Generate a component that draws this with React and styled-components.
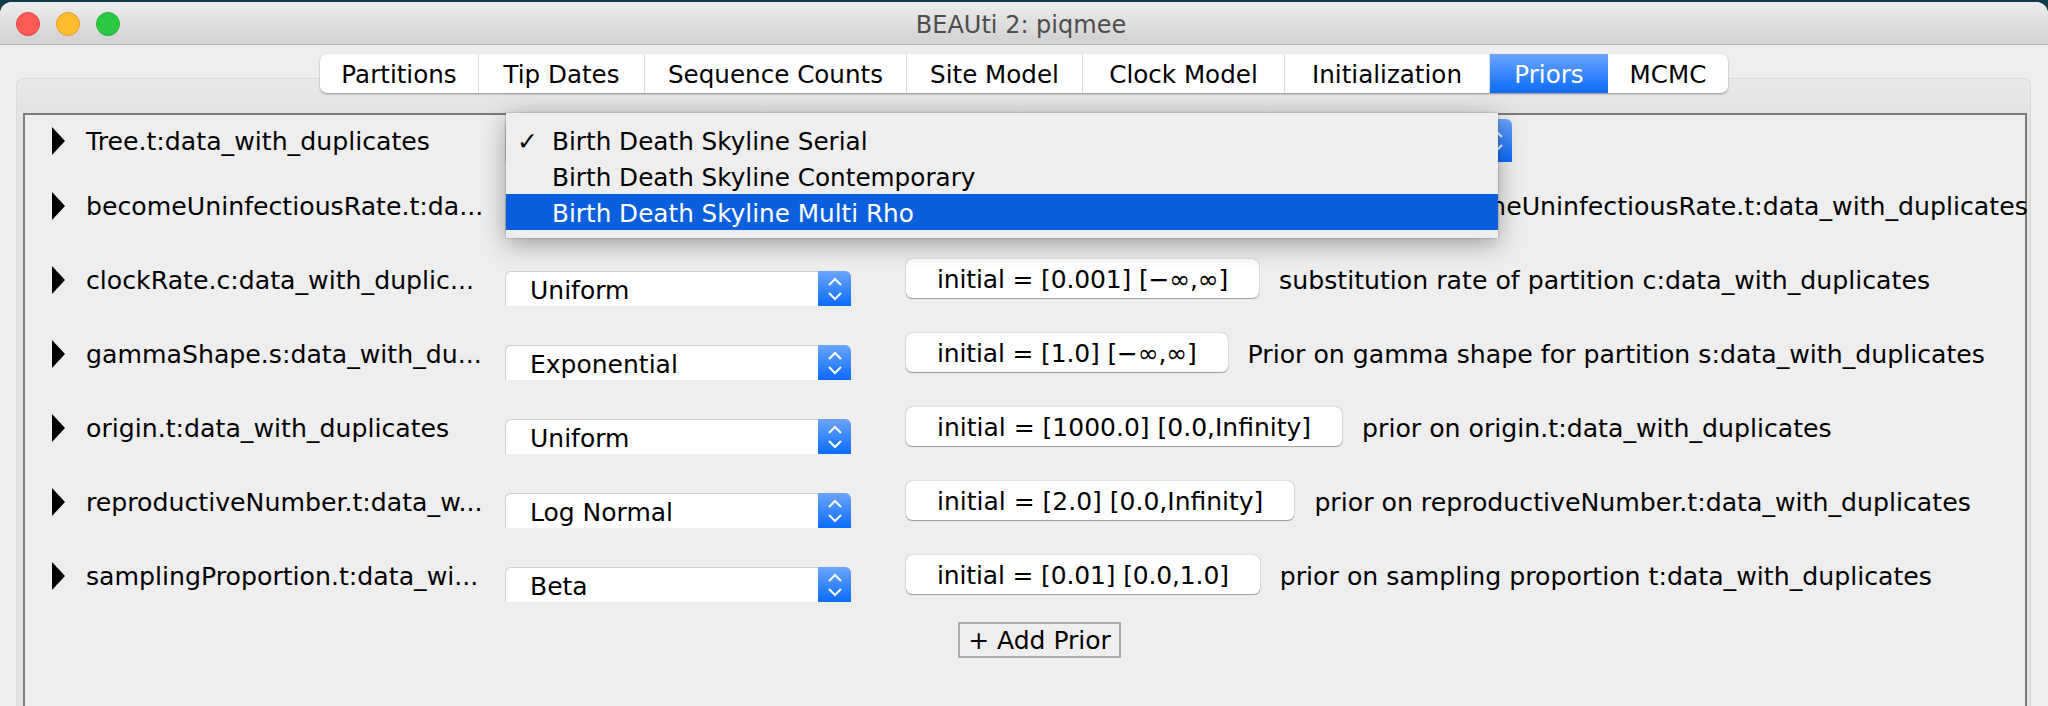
import React from 'react';
import styled, {createGlobalStyle} from 'styled-components';

const Global = createGlobalStyle`
  html, body {
    margin: 0;
    height: 100%;
    overflow: hidden;
    background: #0f3a4a;
    font-family: "DejaVu Sans", "Liberation Sans", sans-serif;
    color: #000;
  }
`;

const Desk = styled.div`
  height: 706px;
  padding-top: 2px;
  box-sizing: border-box;
`;

const Window = styled.div`
  position: relative;
  height: 704px;
  background: #eeeeee;
  border-radius: 12px 12px 0 0;
  overflow: hidden;
`;

const TitleBar = styled.div`
  position: relative;
  height: 43px;
  padding: 3px 6px 0 0;
  display: flex;
  align-items: center;
  justify-content: center;
  box-sizing: border-box;
  background: linear-gradient(#ececec, #d1d1d1);
  border-bottom: 1px solid #b4b4b4;
  color: #4d4d4d;
  font-size: 24px;
`;

const Lights = styled.div`
  position: absolute;
  left: 16px;
  top: 10px;
  display: flex;
  gap: 16px;
`;

const Light = styled.div`
  width: 24px;
  height: 24px;
  box-sizing: border-box;
  border-radius: 50%;
  background: ${p => p.$color};
  border: 1px solid ${p => p.$edge};
`;

const TabBar = styled.div`
  position: relative;
  z-index: 1;
  display: flex;
  width: 1408px;
  height: 39px;
  margin: 9px 0 0 320px;
  background: #fff;
  border-radius: 7px;
  box-shadow: 0 1px 2px rgba(0, 0, 0, 0.4);
  overflow: hidden;
`;

const Tab = styled.div`
  width: ${p => p.$w}px;
  padding-top: 2px;
  box-sizing: border-box;
  display: flex;
  align-items: center;
  justify-content: center;
  font-size: 24.6px;
  border-right: ${p => (p.$last || p.$active ? 'none' : '1px solid #dcdcdc')};
  color: ${p => (p.$active ? '#fff' : '#000')};
  background: ${p => (p.$active ? 'linear-gradient(#6ba5fb, #0a6cff)' : 'transparent')};
`;

const TabPanel = styled.div`
  height: 640px;
  margin: -15px 17px 0 16px;
  padding: 34px 3px 0 6px;
  box-sizing: border-box;
  background: linear-gradient(#e9e9e9, #e2e2e2 40px);
  border: 1px solid #dadada;
  border-radius: 7px;
`;

const Inner = styled.div`
  position: relative;
  height: 620px;
  box-sizing: border-box;
  background: #eeeeee;
  border: 2px solid #7c7c7c;
  border-bottom: none;
`;

const Row = styled.div`
  display: flex;
  align-items: flex-start;
  height: ${p => p.$h}px;
  padding-left: 26px;
`;

const Arrow = styled.svg`
  flex: none;
  width: 14px;
  height: 28px;
  margin: 12px 21px 0 0;
`;

const Name = styled.div`
  flex: none;
  width: 419px;
  margin-top: 12px;
  font-size: 25.2px;
  line-height: 30px;
  white-space: nowrap;
`;

const Combo = styled.div`
  position: relative;
  flex: none;
  display: flex;
  width: ${p => p.$w}px;
  height: ${p => p.$h}px;
  margin-top: ${p => p.$top}px;
  box-sizing: border-box;
  background: #fff;
  border-top: 1px solid #cfcfcf;
  border-left: 1px solid #cfcfcf;
  border-radius: 6px 6px 0 0;
  font-size: 25px;
`;

const ComboText = styled.div`
  flex: 1;
  padding: 4px 0 0 24px;
  line-height: 30px;
`;

const Stepper = styled.div`
  flex: none;
  width: 33px;
  margin: -1px 0 0;
  display: flex;
  align-items: center;
  justify-content: center;
  background: linear-gradient(#6ba5fb, #0a6cff);
  border-radius: 0 6px 0 0;
`;

const InitialButton = styled.div`
  flex: none;
  height: 39px;
  margin: 5px 20px 0 55px;
  padding: 2px 31px 0;
  display: flex;
  align-items: center;
  box-sizing: border-box;
  background: #fff;
  border-radius: 6px;
  box-shadow: 0 0 1px rgba(0, 0, 0, 0.5), 0 1px 1px rgba(0, 0, 0, 0.3);
  font-size: 25px;
  letter-spacing: ${p => (p.$tight ? '-0.15px' : '0')};
  white-space: nowrap;
`;

const Description = styled.div`
  flex: none;
  margin-top: 12px;
  font-size: 25.2px;
  line-height: 30px;
  white-space: nowrap;
`;

const AddRow = styled.div`
  display: flex;
  justify-content: center;
  margin-top: -2px;
  padding-left: 29px;
`;

const AddButton = styled.div`
  width: 163px;
  height: 36px;
  box-sizing: border-box;
  display: flex;
  align-items: center;
  justify-content: center;
  border: 2px solid #ababab;
  font-size: 25px;
`;

const Popup = styled.div`
  position: absolute;
  left: 481px;
  top: -2px;
  width: 992px;
  height: 125px;
  box-sizing: border-box;
  padding-top: 9px;
  background: #eeeeee;
  box-shadow: 0 6px 24px rgba(0, 0, 0, 0.35), 0 0 2px rgba(0, 0, 0, 0.3);
  font-size: 24.7px;
`;

const PopupItem = styled.div`
  position: relative;
  height: 36px;
  padding-left: 46px;
  display: flex;
  align-items: center;
  padding-top: 2px;
  box-sizing: border-box;
  color: ${p => (p.$selected ? '#fff' : '#000')};
  background: ${p => (p.$selected ? '#0a5fdc' : 'transparent')};
`;

const Check = styled.span`
  position: absolute;
  left: 11px;
  font-size: 25px;
`;

const tabs = [
  ['Partitions', 159],
  ['Tip Dates', 166],
  ['Sequence Counts', 262],
  ['Site Model', 176],
  ['Clock Model', 202],
  ['Initialization', 205],
  ['Priors', 118],
  ['MCMC', 120],
];

const rows = [
  {name: 'becomeUninfectiousRate.t:da...', dist: 'Uniform', initial: 'initial = [1.0] [0.0,Infinity]', desc: 'prior on becomeUninfectiousRate.t:data_with_duplicates'},
  {name: 'clockRate.c:data_with_duplic...', dist: 'Uniform', initial: 'initial = [0.001] [−∞,∞]', tight: true, desc: 'substitution rate of partition c:data_with_duplicates'},
  {name: 'gammaShape.s:data_with_du...', dist: 'Exponential', initial: 'initial = [1.0] [−∞,∞]', tight: true, desc: 'Prior on gamma shape for partition s:data_with_duplicates'},
  {name: 'origin.t:data_with_duplicates', dist: 'Uniform', initial: 'initial = [1000.0] [0.0,Infinity]', desc: 'prior on origin.t:data_with_duplicates'},
  {name: 'reproductiveNumber.t:data_w...', dist: 'Log Normal', initial: 'initial = [2.0] [0.0,Infinity]', desc: 'prior on reproductiveNumber.t:data_with_duplicates'},
  {name: 'samplingProportion.t:data_wi...', dist: 'Beta', initial: 'initial = [0.01] [0.0,1.0]', tight: true, desc: 'prior on sampling proportion t:data_with_duplicates'},
];

const Expand = () => (
  <Arrow viewBox="0 0 14 28">
    <path d="M1 0 L14 14 L1 28 Z" fill="#000" />
  </Arrow>
);

const Chevrons = () => (
  <svg width="16" height="26" viewBox="0 0 16 26" fill="none" stroke="#fff" strokeWidth="2">
    <path d="M2 9 L8 3 L14 9" />
    <path d="M2 17 L8 23 L14 17" />
  </svg>
);

export default function App() {
  return (
    <Desk>
      <Global />
      <Window>
        <TitleBar>
          <Lights>
            <Light $color="#fc5b57" $edge="#e5453f" />
            <Light $color="#febb2e" $edge="#e0a028" />
            <Light $color="#2ac840" $edge="#28ad38" />
          </Lights>
          BEAUti 2: piqmee
        </TitleBar>
        <TabBar>
          {tabs.map(([label, w], i) => (
            <Tab key={label} $w={w} $active={label === 'Priors'} $last={i === tabs.length - 1}>{label}</Tab>
          ))}
        </TabBar>
        <TabPanel>
          <Inner>
            <Row $h={65}>
              <Expand />
              <Name>Tree.t:data_with_duplicates</Name>
              <Combo $w={1007} $h={43} $top={4}>
                <ComboText>Birth Death Skyline Serial</ComboText>
                <Stepper><Chevrons /></Stepper>
              </Combo>
            </Row>
            {rows.map(row => (
              <Row key={row.name} $h={74}>
                <Expand />
                <Name>{row.name}</Name>
                <Combo $w={346} $h={35} $top={17}>
                  <ComboText>{row.dist}</ComboText>
                  <Stepper><Chevrons /></Stepper>
                </Combo>
                <InitialButton $tight={row.tight}>{row.initial}</InitialButton>
                <Description>{row.desc}</Description>
              </Row>
            ))}
            <AddRow>
              <AddButton>+ Add Prior</AddButton>
            </AddRow>
            <Popup>
              <PopupItem><Check>✓</Check>Birth Death Skyline Serial</PopupItem>
              <PopupItem>Birth Death Skyline Contemporary</PopupItem>
              <PopupItem $selected>Birth Death Skyline Multi Rho</PopupItem>
            </Popup>
          </Inner>
        </TabPanel>
      </Window>
    </Desk>
  );
}
